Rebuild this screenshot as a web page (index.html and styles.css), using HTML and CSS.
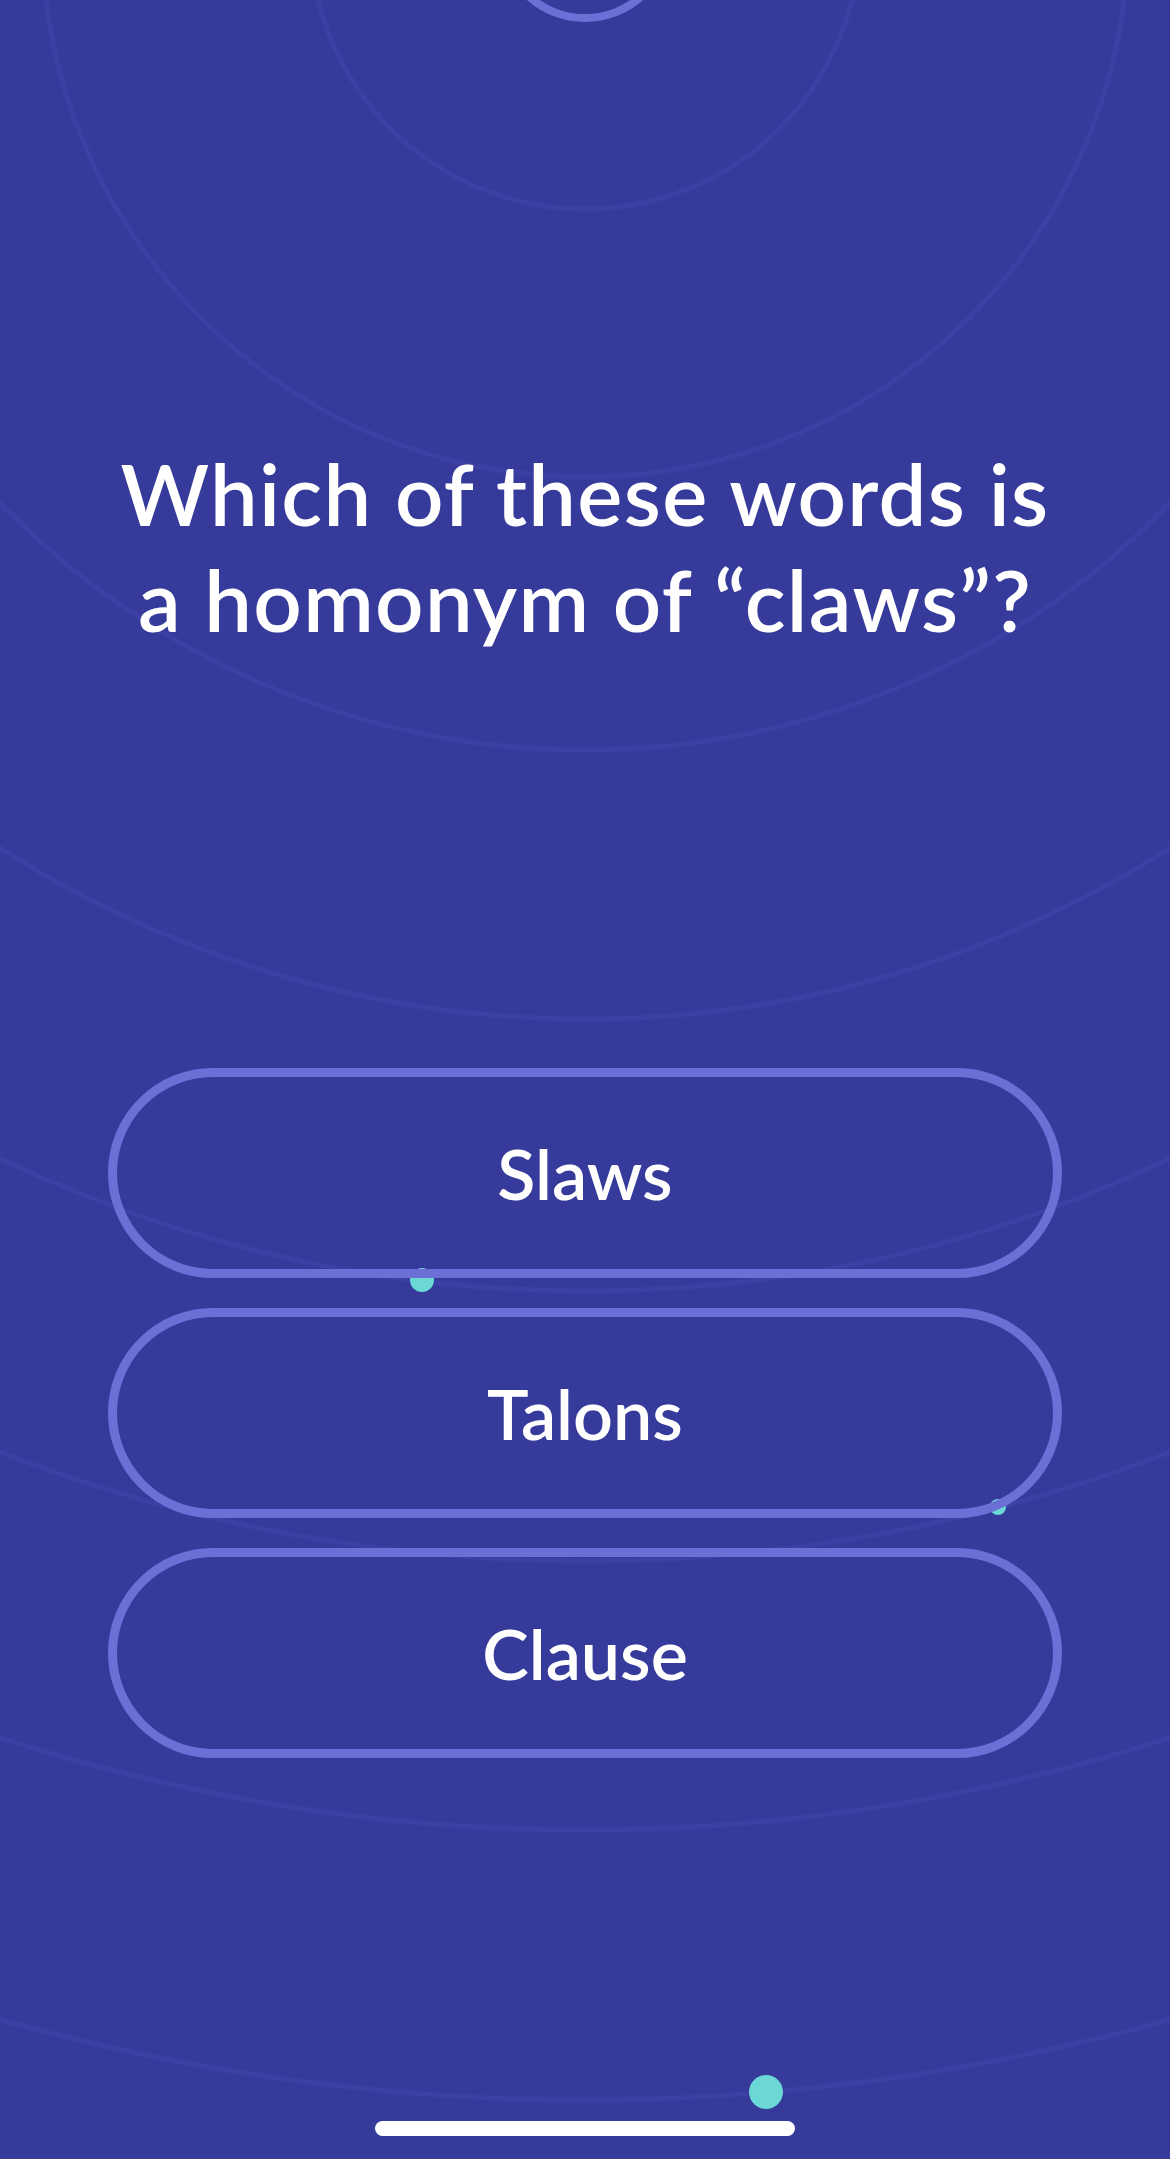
FILE: index.html
```html
<!DOCTYPE html>
<html lang="en">
<head>
<meta charset="utf-8">
<title>Quiz</title>
<link rel="stylesheet" href="styles.css">
</head>
<body>
<div class="screen">
  <svg class="backdrop" width="1170" height="2159" viewBox="0 0 1170 2159" aria-hidden="true">
    <g class="rings">
      <circle cx="585" cy="-66" r="275"/>
      <circle cx="585" cy="-66" r="543"/>
      <circle cx="585" cy="-66" r="816"/>
      <circle cx="585" cy="-66" r="1085"/>
      <circle cx="585" cy="-66" r="1357"/>
      <circle cx="585" cy="-66" r="1627"/>
      <circle cx="585" cy="-66" r="1896"/>
      <circle cx="585" cy="-66" r="2166"/>
    </g>
    <circle class="timer" cx="585" cy="-66" r="84"/>
    <circle class="dot" cx="422" cy="1280" r="12"/>
    <circle class="dot" cx="998" cy="1507" r="8"/>
    <circle class="dot" cx="766" cy="2092" r="17"/>
  </svg>

  <main class="content">
    <h1 class="question">Which of these words is<br>a homonym of “claws”?</h1>
    <div class="answers">
      <button class="answer">Slaws</button>
      <button class="answer">Talons</button>
      <button class="answer">Clause</button>
    </div>
  </main>

  <div class="home-indicator"></div>
</div>
</body>
</html>
```

FILE: styles.css
```css
html, body {
  margin: 0;
  padding: 0;
  background: #353a9b;
}

.screen {
  position: relative;
  width: 1170px;
  height: 2159px;
  overflow: hidden;
  background: #353a9b;
  font-family: Lato, "Noto Sans", sans-serif;
  color: #ffffff;
}

.backdrop {
  position: absolute;
  left: 0;
  top: 0;
}

.rings circle {
  fill: none;
  stroke: #3c40a5;
  stroke-width: 5;
}

.timer {
  fill: none;
  stroke: #6b6fd6;
  stroke-width: 8;
}

.dot {
  fill: #6bd8d6;
}

.content {
  position: relative;
  display: flex;
  flex-direction: column;
  align-items: center;
  padding-top: 440px;
}

.question {
  margin: 0;
  font-size: 85px;
  line-height: 106px;
  font-weight: 600;
  letter-spacing: 1.3px;
  text-align: center;
}

.answers {
  display: flex;
  flex-direction: column;
  gap: 30px;
  margin-top: 416px;
  width: 954px;
}

.answer {
  display: flex;
  align-items: center;
  justify-content: center;
  box-sizing: border-box;
  height: 210px;
  width: 100%;
  border: 9px solid #6b6fd6;
  border-radius: 105px;
  background: transparent;
  color: #ffffff;
  font-family: inherit;
  font-size: 70px;
  font-weight: 600;
  padding: 0;
}

.home-indicator {
  position: absolute;
  left: 375px;
  top: 2121px;
  width: 420px;
  height: 15px;
  border-radius: 8px;
  background: #ffffff;
}
```
